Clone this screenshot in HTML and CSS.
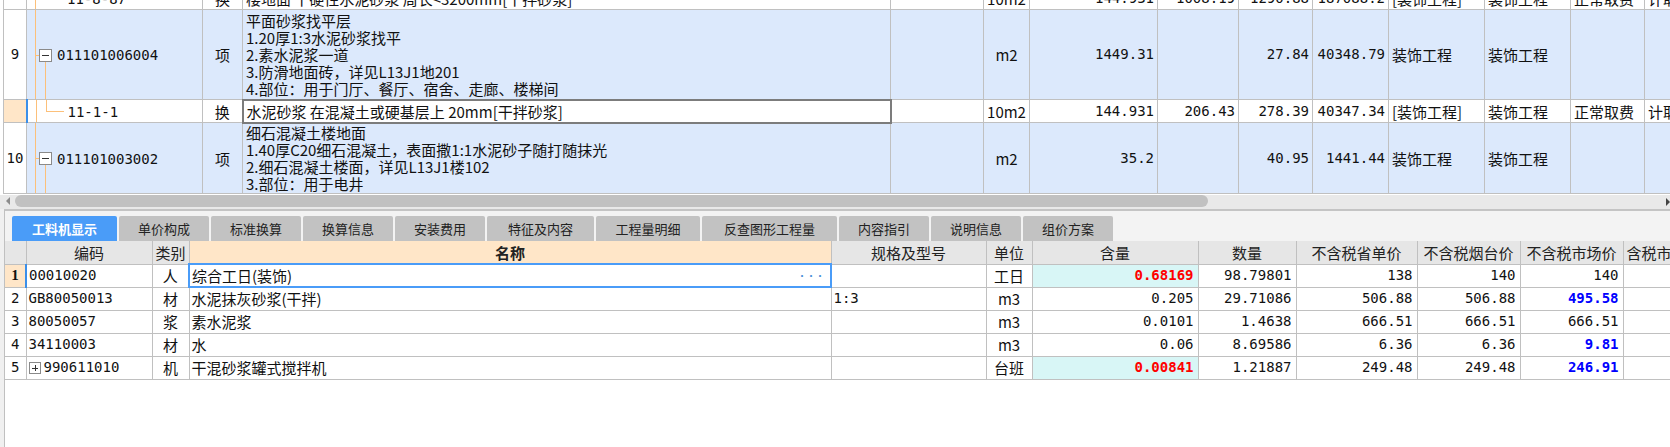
FILE: index.html
```html
<!DOCTYPE html>
<html lang="zh-CN">
<head>
  <meta charset="UTF-8">
  <meta name="viewport" content="width=device-width, initial-scale=1.0">
  <title>分部分项 - 工料机显示</title>
  <link rel="stylesheet" href="styles.css">
</head>
<body>
  <!-- 上方：清单/定额表格（已滚动） -->
  <div class="upper">
    <table class="grid top-grid">
      <colgroup>
        <col class="t-no"><col class="t-code"><col class="t-kind"><col class="t-name"><col class="t-spec"><col class="t-unit">
        <col class="t-qty"><col class="t-n1"><col class="t-n2"><col class="t-n3"><col class="t-major"><col class="t-major2"><col class="t-fee"><col class="t-last">
      </colgroup>
      <tr class="r-part">
        <td class="no"></td>
        <td class="code child"><span class="ln ln-main"></span><span class="mono">11-8-87</span></td>
        <td class="center">换</td>
        <td>楼地面 干硬性水泥砂浆 周长&lt;3200mm[干拌砂浆]</td>
        <td></td>
        <td class="center">10m2</td>
        <td class="num">144.931</td>
        <td class="num">1008.19</td>
        <td class="num">1290.88</td>
        <td class="num">187088.2</td>
        <td>[装饰工程]</td>
        <td>装饰工程</td>
        <td>正常取费</td>
        <td>计取</td>
      </tr>
      <tr class="r-item r-5">
        <td class="no">9</td>
        <td class="code"><span class="ln ln-main"></span><span class="ln ln-stub"></span><span class="fold"></span><span class="ln ln-down"></span><span class="mono">011101006004</span></td>
        <td class="center">项</td>
        <td class="multi">平面砂浆找平层<br>1.20厚1:3水泥砂浆找平<br>2.素水泥浆一道<br>3.防滑地面砖，详见L13J1地201<br>4.部位：用于门厅、餐厅、宿舍、走廊、楼梯间</td>
        <td></td>
        <td class="center">m2</td>
        <td class="num">1449.31</td>
        <td class="num"></td>
        <td class="num">27.84</td>
        <td class="num">40348.79</td>
        <td>装饰工程</td>
        <td>装饰工程</td>
        <td></td>
        <td></td>
      </tr>
      <tr class="r-sub">
        <td class="no current"></td>
        <td class="code child sel-left"><span class="ln ln-main"></span><span class="ln ln-up"></span><span class="ln ln-elbow"></span><span class="mono">11-1-1</span></td>
        <td class="center">换</td>
        <td class="editing">水泥砂浆 在混凝土或硬基层上 20mm[干拌砂浆]</td>
        <td></td>
        <td class="center">10m2</td>
        <td class="num">144.931</td>
        <td class="num">206.43</td>
        <td class="num">278.39</td>
        <td class="num">40347.34</td>
        <td>[装饰工程]</td>
        <td>装饰工程</td>
        <td>正常取费</td>
        <td>计取</td>
      </tr>
      <tr class="r-item r-4">
        <td class="no">10</td>
        <td class="code"><span class="ln ln-main"></span><span class="ln ln-stub"></span><span class="fold"></span><span class="ln ln-down"></span><span class="mono">011101003002</span></td>
        <td class="center">项</td>
        <td class="multi">细石混凝土楼地面<br>1.40厚C20细石混凝土，表面撒1:1水泥砂子随打随抹光<br>2.细石混凝土楼面，详见L13J1楼102<br>3.部位：用于电井</td>
        <td></td>
        <td class="center">m2</td>
        <td class="num">35.2</td>
        <td class="num"></td>
        <td class="num">40.95</td>
        <td class="num">1441.44</td>
        <td>装饰工程</td>
        <td>装饰工程</td>
        <td></td>
        <td></td>
      </tr>
    </table>
  </div>

  <div class="hscroll">
    <span class="hs-left"></span>
    <span class="hs-thumb"></span>
    <span class="hs-right"></span>
  </div>

  <!-- 下方：属性页 -->
  <div class="lower">
    <div class="tabs">
      <span class="tab active w105">工料机显示</span>
      <span class="tab">单价构成</span>
      <span class="tab">标准换算</span>
      <span class="tab">换算信息</span>
      <span class="tab">安装费用</span>
      <span class="tab w107">特征及内容</span>
      <span class="tab w104">工程量明细</span>
      <span class="tab w135">反查图形工程量</span>
      <span class="tab">内容指引</span>
      <span class="tab">说明信息</span>
      <span class="tab">组价方案</span>
    </div>

    <table class="grid bottom-grid">
      <colgroup>
        <col class="b-no"><col class="b-code"><col class="b-kind"><col class="b-name"><col class="b-spec"><col class="b-unit">
        <col class="b-hl"><col class="b-sl"><col class="b-p1"><col class="b-p2"><col class="b-p3"><col class="b-last">
      </colgroup>
      <tr class="head">
        <th></th>
        <th>编码</th>
        <th>类别</th>
        <th class="focus-col">名称</th>
        <th>规格及型号</th>
        <th>单位</th>
        <th>含量</th>
        <th>数量</th>
        <th>不含税省单价</th>
        <th>不含税烟台价</th>
        <th>不含税市场价</th>
        <th>含税市场价</th>
      </tr>
      <tr>
        <td class="no current">1</td>
        <td class="sel-left mono">00010020</td>
        <td class="center">人</td>
        <td class="active-cell">综合工日(装饰)<span class="more">···</span></td>
        <td></td>
        <td class="center">工日</td>
        <td class="num hl red">0.68169</td>
        <td class="num">98.79801</td>
        <td class="num">138</td>
        <td class="num">140</td>
        <td class="num">140</td>
        <td></td>
      </tr>
      <tr>
        <td class="no">2</td>
        <td class="mono">GB80050013</td>
        <td class="center">材</td>
        <td>水泥抹灰砂浆(干拌)</td>
        <td class="mono">1:3</td>
        <td class="center">m3</td>
        <td class="num">0.205</td>
        <td class="num">29.71086</td>
        <td class="num">506.88</td>
        <td class="num">506.88</td>
        <td class="num blue">495.58</td>
        <td></td>
      </tr>
      <tr>
        <td class="no">3</td>
        <td class="mono">80050057</td>
        <td class="center">浆</td>
        <td>素水泥浆</td>
        <td></td>
        <td class="center">m3</td>
        <td class="num">0.0101</td>
        <td class="num">1.4638</td>
        <td class="num">666.51</td>
        <td class="num">666.51</td>
        <td class="num">666.51</td>
        <td></td>
      </tr>
      <tr>
        <td class="no">4</td>
        <td class="mono">34110003</td>
        <td class="center">材</td>
        <td>水</td>
        <td></td>
        <td class="center">m3</td>
        <td class="num">0.06</td>
        <td class="num">8.69586</td>
        <td class="num">6.36</td>
        <td class="num">6.36</td>
        <td class="num blue">9.81</td>
        <td></td>
      </tr>
      <tr>
        <td class="no">5</td>
        <td class="code-plus mono"><span class="fold plus"></span>990611010</td>
        <td class="center">机</td>
        <td>干混砂浆罐式搅拌机</td>
        <td></td>
        <td class="center">台班</td>
        <td class="num hl red">0.00841</td>
        <td class="num">1.21887</td>
        <td class="num">249.48</td>
        <td class="num">249.48</td>
        <td class="num blue">246.91</td>
        <td></td>
      </tr>
    </table>
  </div>
</body>
</html>
```

FILE: styles.css
```css
* {
  box-sizing: border-box;
}
html, body {
  margin: 0;
}
body {
  width: 1670px;
  height: 447px;
  overflow: hidden;
  background: #f0f0f0;
  font-family: "Noto Sans CJK SC", sans-serif;
  font-size: 15px;
  color: #111;
}

/* 通用表格 */
.grid {
  border-collapse: collapse;
  table-layout: fixed;
}
.grid td,
.grid th {
  border: 1px solid #c0c0c0;
  padding: 0 3px;
  white-space: nowrap;
  overflow: hidden;
  font-weight: normal;
  line-height: 17px;
  text-align: left;
}
.grid .center {
  text-align: center;
}
.grid .num {
  text-align: right;
  font-family: "DejaVu Sans Mono", monospace;
  font-size: 14px;
}
.mono {
  font-family: "DejaVu Sans Mono", monospace;
  font-size: 14px;
}
.grid .no {
  text-align: center;
  padding: 0;
  background: #fff;
  font-family: "DejaVu Sans Mono", monospace;
  font-size: 14px;
}
.grid .no.current {
  background: #ffe6c8;
  font-weight: bold;
  font-family: "Liberation Serif", serif;
  font-size: 15px;
}
.grid .sel-left {
  border-left: 2px solid #3b8fe9;
}

/* 上方表格 */
.upper {
  height: 195px;
  overflow: hidden;
  background: #fff;
  padding-left: 3px;
}
.top-grid {
  width: 1701px;
  margin-top: -14px;
}
.t-no { width: 23px; }
.t-code { width: 176px; }
.t-kind { width: 40px; }
.t-name { width: 648px; }
.t-spec { width: 93px; }
.t-unit { width: 46px; }
.t-qty { width: 128px; }
.t-n1 { width: 81px; }
.t-n2 { width: 74px; }
.t-n3 { width: 76px; }
.t-major { width: 96px; }
.t-major2 { width: 86px; }
.t-fee { width: 74px; }
.t-last { width: 60px; }

.top-grid td {
  height: 23px;
  background: #fff;
}
.top-grid .r-item td {
  background: #dce9fc;
}
.top-grid .r-item td.no {
  background: #fff;
}
.top-grid .r-5 td {
  height: 90px;
}
.top-grid .r-4 td {
  height: 71px;
}
.top-grid .multi {
  vertical-align: middle;
}
.top-grid .editing {
  border: 2px solid #7c7c7c;
  background: #fff;
}

/* 树形连线 */
.top-grid .code {
  position: relative;
  padding-left: 30px;
}
.top-grid .code.child {
  padding-left: 40px;
}
.ln {
  position: absolute;
  background: #fcc07a;
}
.ln-main {
  left: 8px;
  top: 0;
  bottom: 0;
  width: 1px;
}
.ln-stub {
  left: 8px;
  top: 50%;
  width: 5px;
  height: 1px;
}
.ln-down {
  left: 18px;
  top: calc(50% + 7px);
  bottom: 0;
  width: 1px;
}
.ln-up {
  left: 18px;
  top: 0;
  height: 50%;
  width: 1px;
}
.ln-elbow {
  left: 18px;
  top: 50%;
  width: 18px;
  height: 1px;
}
.fold {
  position: absolute;
  left: 12px;
  top: 50%;
  margin-top: -6px;
  width: 13px;
  height: 13px;
  border: 1px solid #8a8a8a;
  background: #fff;
}
.fold::before {
  content: "";
  position: absolute;
  left: 2px;
  right: 2px;
  top: 5px;
  height: 1px;
  background: #333;
}
.fold.plus {
  left: 2px;
  width: 12px;
  height: 12px;
}
.fold.plus::after {
  content: "";
  position: absolute;
  top: 2px;
  bottom: 2px;
  left: 5px;
  width: 1px;
  background: #333;
}

/* 横向滚动条 */
.hscroll {
  height: 14px;
  background: #e9e9e9;
  display: flex;
  align-items: flex-start;
}
.hs-left {
  width: 0;
  height: 0;
  margin: 2px 5px 0 6px;
  border-top: 4px solid transparent;
  border-bottom: 4px solid transparent;
  border-right: 4px solid #8c8c8c;
}
.hs-thumb {
  width: 1193px;
  height: 12px;
  border-radius: 6px;
  background: #c1c1c1;
}
.hs-right {
  width: 0;
  height: 0;
  margin: 3px 0 0 auto;
  border-top: 4px solid transparent;
  border-bottom: 4px solid transparent;
  border-left: 4px solid #444;
}

/* 下方属性页 */
.lower {
  margin-left: 4px;
  height: 238px;
  border-left: 1px solid #c0c0c0;
  border-top: 2px solid #c4c4c4;
  background: #fff;
}
.tabs {
  height: 30px;
  padding-left: 7px;
  display: flex;
  align-items: flex-end;
  gap: 2px;
  background: #f3f3f3;
}
.tab {
  width: 90px;
  height: 25px;
  line-height: 25px;
  text-align: center;
  font-size: 13px;
  color: #222;
  background: #c2c2c2;
  border-radius: 2px 2px 0 0;
}
.tab.active {
  background: #4a9cf8;
  color: #fff;
  font-weight: bold;
}
.tab.w104 { width: 104px; }
.tab.w105 { width: 105px; }
.tab.w107 { width: 107px; }
.tab.w135 { width: 135px; }

.bottom-grid {
  width: 1698px;
}
.b-no { width: 21px; }
.b-code { width: 126px; }
.b-kind { width: 37px; }
.b-name { width: 642px; }
.b-spec { width: 155px; }
.b-unit { width: 46px; }
.b-hl { width: 166px; }
.b-sl { width: 98px; }
.b-p1 { width: 121px; }
.b-p2 { width: 103px; }
.b-p3 { width: 103px; }
.b-last { width: 80px; }

.bottom-grid td,
.bottom-grid th {
  height: 23px;
}
.bottom-grid tr > :first-child {
  border-left: none;
}
.bottom-grid tr:first-child > * {
  border-top: none;
}
.bottom-grid th {
  background: #e6e6e6;
  text-align: center;
  color: #222;
}
.bottom-grid th.focus-col {
  background: #ffe6c8;
  font-weight: bold;
}
.bottom-grid td {
  padding: 0 2px;
}
.bottom-grid .num {
  padding-right: 4px;
}
.bottom-grid .hl {
  background: #d8f6f6;
}
.bottom-grid .red {
  color: #ff0000;
  font-weight: bold;
}
.bottom-grid .blue {
  color: #0000ff;
  font-weight: bold;
}
.bottom-grid .active-cell {
  border: 2px solid #4a9cf8;
}
.more {
  float: right;
  color: #4a8fd8;
  font-size: 10px;
  letter-spacing: -1px;
  margin-right: 4px;
}
.bottom-grid .code-plus {
  position: relative;
  padding-left: 17px;
}
```
